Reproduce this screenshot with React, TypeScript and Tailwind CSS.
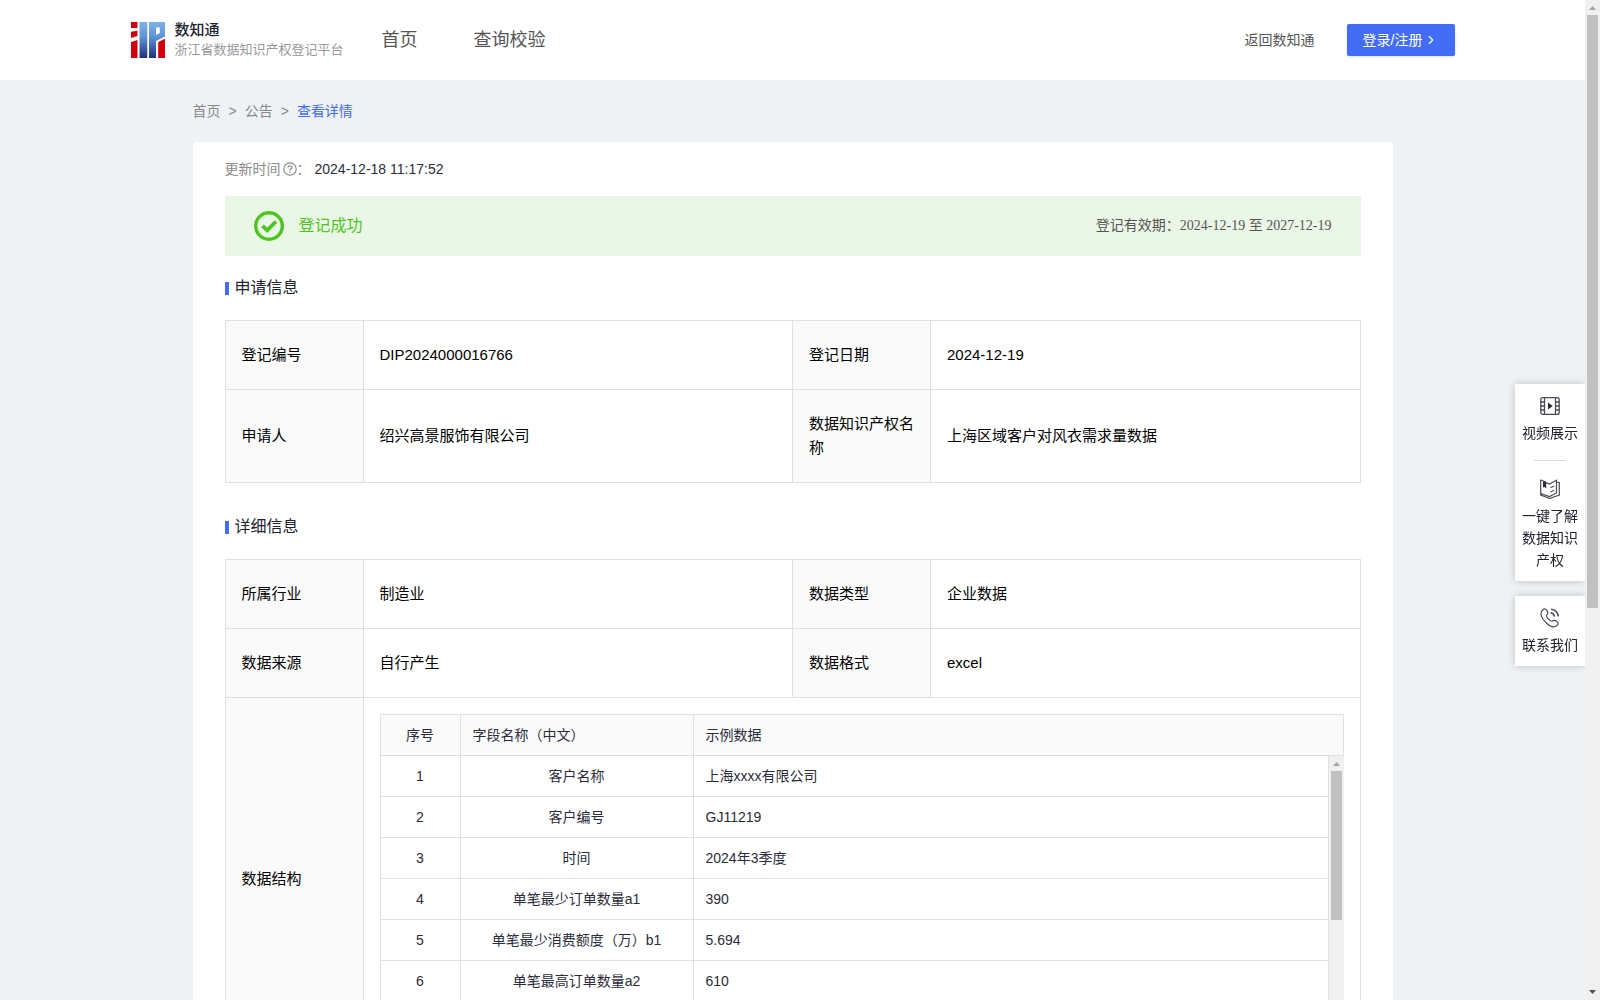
import { useState, type ReactNode } from 'react'
import clsx from 'clsx'
import { ChevronRight } from 'lucide-react'

const applyRows = [
    ['登记编号', 'DIP2024000016766', '登记日期', '2024-12-19'],
    ['申请人', '绍兴高景服饰有限公司', '数据知识产权名称', '上海区域客户对风衣需求量数据'],
]

const detailRows = [
    ['所属行业', '制造业', '数据类型', '企业数据'],
    ['数据来源', '自行产生', '数据格式', 'excel'],
]

const fields = [
    { name: '客户名称', sample: '上海xxxx有限公司' },
    { name: '客户编号', sample: 'GJ11219' },
    { name: '时间', sample: '2024年3季度' },
    { name: '单笔最少订单数量a1', sample: '390' },
    { name: '单笔最少消费额度（万）b1', sample: '5.694' },
    { name: '单笔最高订单数量a2', sample: '610' },
]

const Logo = () => (
    <svg viewBox="0 0 34 36" className="w-[34px] h-9" aria-hidden="true">
        <defs>
            <linearGradient id="logo-blue" x1="0" y1="0" x2="0" y2="36" gradientUnits="userSpaceOnUse">
                <stop offset="0" stopColor="#7fb2e8" />
                <stop offset="0.4" stopColor="#5f95d8" />
                <stop offset="1" stopColor="#22307c" />
            </linearGradient>
        </defs>
        <path d="M0 0H6.500V6H0Z M0 9.800L6.500 8.800V14L0 16Z M0 20L6.500 18V36H0Z" fill="#d2000f" />
        <path d="M8.500 0H16.300V36H8.500Z" fill="url(#logo-blue)" />
        <path d="M18 0H34V14.500L25 19V36H18Z M25 5.500V13L28.800 11V5.500Z" fill="url(#logo-blue)" fillRule="evenodd" />
        <path d="M27.200 20L34 16.800V36H27.200Z" fill="#d2000f" />
    </svg>
)

const SuccessIcon = () => (
    <svg viewBox="0 0 30 30" className="size-[30px]" fill="none" stroke="#4dc41f" aria-hidden="true">
        <circle cx="15" cy="15" r="13.300" strokeWidth="3.400" />
        <path d="M8.500 14.800L13.200 19.300L22 10.500" strokeWidth="3.800" />
    </svg>
)

const HelpIcon = () => (
    <svg viewBox="0 0 14 14" className="size-[14px]" fill="none" stroke="#8c8c8c" aria-hidden="true">
        <circle cx="7" cy="7" r="6.200" strokeWidth="1.200" />
        <path d="M5 5.600C5 3.200 9 3.200 9 5.500C9 7 7 6.900 7 8.500" strokeWidth="1.200" />
        <path d="M7 9.600V10.900" strokeWidth="1.300" />
    </svg>
)

const VideoIcon = () => (
    <svg viewBox="0 0 20 20" className="size-5" fill="none" stroke="#4a4b57" strokeWidth="1.300" aria-hidden="true">
        <rect x="0.800" y="1.600" width="18.400" height="16.800" rx="2" />
        <path d="M4.500 1.600V18.400M15.500 1.600V18.400M0.800 6H4.500M0.800 10H4.500M0.800 14H4.500M15.500 6H19.200M15.500 10H19.200M15.500 14H19.200" />
        <path d="M8 6.500V13.500L12.800 10Z" fill="#2b2c3a" stroke="none" />
    </svg>
)

const BookIcon = () => (
    <svg viewBox="0 0 20 20" className="size-5" fill="none" stroke="#4a4b57" strokeWidth="1.200" aria-hidden="true">
        <path d="M3 1.500L0.700 1.200V14.500L9.500 17.500L16.500 14V1.200L9.500 5L6.200 3.600" />
        <path d="M16.500 3L19.300 3.500V16L13 18.300L10 19.500L0.700 16V14" />
        <path d="M3 1.500L6.200 2.800V9.500L4.600 8L3 8.500Z" fill="#2b2c3a" stroke="none" />
        <path d="M10.500 8.800L14.200 7M10.500 13L14.200 11.200" />
    </svg>
)

const PhoneIcon = () => (
    <svg viewBox="0 0 20 20" className="size-5" fill="none" stroke="#4a4b57" strokeWidth="1.200" aria-hidden="true">
        <path d="M2.800 1.800C4.500 0.300 5.800 0.800 7 2.600C8.200 4.400 8.300 5.400 7 6.600C5.700 7.800 6 8.500 8 10.700C10.400 13.300 11.300 14 12.500 13C13.900 11.800 14.800 11.900 16.500 13.200C18.300 14.600 18.600 15.800 17 17.400C14.500 19.900 10.500 19 6.100 14.800C1 9.900-0.600 4.800 2.800 1.800Z" />
        <path d="M10.500 4.700C12.700 5 14 6.300 14.500 8.500M11 1.200C15 1.500 17.800 4.300 18.300 8.300" strokeWidth="1.600" />
    </svg>
)

// Classic scroll bar: arrows at both ends, thumb between them
const ScrollBar = ({ thumb }: { thumb: string }) => (
    <div className="w-[15px] shrink-0 bg-[#f0f0f0] flex flex-col items-center" aria-hidden="true">
        <svg viewBox="0 0 15 15" className="size-[15px] shrink-0"><path d="M4 10L7.500 6L11 10Z" fill="#a3a3a3" /></svg>
        <div className="grow w-[11px]">
            <div className="bg-[#c1c1c1]" style={{ height: thumb }} />
        </div>
        <svg viewBox="0 0 15 15" className="size-[15px] shrink-0"><path d="M4 5L7.500 9L11 5Z" fill="#505050" /></svg>
    </div>
)

const SectionTitle = ({ children }: { children: ReactNode }) => (
    <h2 className="flex items-center gap-[6px] text-base leading-6 text-[#22222f]">
        <span className="w-1 h-[13px] mt-px bg-[#446df6]" />
        {children}
    </h2>
)

const InfoTable = ({ rows, children }: { rows: string[][]; children?: ReactNode }) => (
    <table className="w-full table-fixed border-collapse text-[15px] leading-6 text-black text-left">
        <colgroup>
            <col className="w-[138px]" />
            <col />
            <col className="w-[138px]" />
            <col />
        </colgroup>
        <tbody>
            {rows.map((row) => (
                <tr key={row[0]} className="h-[69px]">
                    {row.map((text, i) =>
                        i % 2 === 0 ? (
                            <th key={i} scope="row" className="border border-[#e0e0e0] bg-[#fafafa] px-4 py-[22px] font-normal">{text}</th>
                        ) : (
                            <td key={i} className="border border-[#e0e0e0] px-4 py-[22px]">{text}</td>
                        )
                    )}
                </tr>
            ))}
            {children}
        </tbody>
    </table>
)

const FieldColumns = () => (
    <colgroup>
        <col className="w-20" />
        <col className="w-[233px]" />
        <col />
    </colgroup>
)

const FieldTable = () => (
    <div className="text-sm leading-[22px] text-[#2b2c3a]">
        <table className="w-full table-fixed border-collapse">
            <FieldColumns />
            <thead>
                <tr className="h-[41px] bg-[#fafafa] text-left">
                    <th className="border border-[#e0e0e0] px-3 font-normal text-center">序号</th>
                    <th className="border border-[#e0e0e0] px-3 font-normal">字段名称（中文）</th>
                    <th className="border border-[#e0e0e0] px-3 font-normal">示例数据</th>
                </tr>
            </thead>
        </table>
        <div className="flex h-[287px] overflow-hidden">
            <div className="grow">
                <table className="w-full table-fixed border-collapse">
                    <FieldColumns />
                    <tbody>
                        {fields.map((field, i) => (
                            <tr key={field.name} className={i === 0 ? 'h-10' : 'h-[41px]'}>
                                <td className={clsx('border border-[#e0e0e0] px-3 text-center', i === 0 && 'border-t-0')}>{i + 1}</td>
                                <td className={clsx('border border-[#e0e0e0] px-3 text-center', i === 0 && 'border-t-0')}>{field.name}</td>
                                <td className={clsx('border border-[#e0e0e0] px-3', i === 0 && 'border-t-0')}>{field.sample}</td>
                            </tr>
                        ))}
                    </tbody>
                </table>
            </div>
            <ScrollBar thumb="58%" />
        </div>
    </div>
)

const SideButton = ({ icon, children }: { icon: ReactNode; children: ReactNode }) => (
    <button type="button" className="flex flex-col items-center gap-[6px] w-full px-[7px] text-sm leading-[22px] text-[#22222f]">
        {icon}
        <span>{children}</span>
    </button>
)

export default function App() {
    const [active, setActive] = useState('')

    return (
        <div className="flex h-screen overflow-hidden bg-[#eef2f5] font-['Liberation_Sans','Noto_Sans_CJK_SC',sans-serif]">
            <div className="grow min-w-0 overflow-hidden">
                <header className="h-20 bg-white">
                    <div className="mx-auto max-w-[1324px] h-full flex items-center">
                        <a href="#" className="flex items-center gap-[10px]">
                            <Logo />
                            <span className="flex flex-col">
                                <strong className="text-[15px] leading-5 font-medium text-[#22222f]">数知通</strong>
                                <span className="text-[13px] leading-5 text-[#999999]">浙江省数据知识产权登记平台</span>
                            </span>
                        </a>
                        <nav className="flex gap-14 ml-[38px] text-lg leading-7 text-[#555555]">
                            {['首页', '查询校验'].map((item) => (
                                <a
                                    key={item}
                                    href="#"
                                    onClick={() => setActive(item)}
                                    className={clsx(active === item && 'text-[#446df6]')}
                                >
                                    {item}
                                </a>
                            ))}
                        </nav>
                        <a href="#" className="ml-auto mr-8 text-sm text-[#555555]">返回数知通</a>
                        <button type="button" className="flex items-center gap-[2px] w-[108px] h-8 pl-4 rounded-xs bg-[#446df6] text-white text-sm shadow-sm">
                            登录/注册
                            <ChevronRight className="size-[14px]" />
                        </button>
                    </div>
                </header>

                <main className="mx-auto max-w-[1200px]">
                    <nav className="flex gap-2 pt-5 pb-5 text-sm leading-[22px] text-[#888888]">
                        <a href="#">首页</a>
                        <span>&gt;</span>
                        <a href="#">公告</a>
                        <span>&gt;</span>
                        <a href="#" className="text-[#446df6]">查看详情</a>
                    </nav>

                    <div className="bg-white rounded-t px-8 pt-4">
                        <div className="flex items-center text-sm leading-[22px] text-[#8c8c8c]">
                            更新时间
                            <span className="ml-[2px]"><HelpIcon /></span>
                            ：
                            <time className="ml-1 text-[#2b2c3a]">2024-12-18 11:17:52</time>
                        </div>

                        <div className="mt-4 mb-5 h-[60px] px-[29px] flex items-center justify-between bg-[#ebf7e6]">
                            <div className="flex items-center gap-[15px] text-base text-[#4dc41f]">
                                <SuccessIcon />
                                登记成功
                            </div>
                            <p className="text-sm text-[#555555] font-['Liberation_Serif','Noto_Sans_CJK_SC',serif]">
                                登记有效期：2024-12-19 至 2027-12-19
                            </p>
                        </div>

                        <SectionTitle>申请信息</SectionTitle>
                        <div className="mt-5 mb-8">
                            <InfoTable rows={applyRows} />
                        </div>

                        <SectionTitle>详细信息</SectionTitle>
                        <div className="mt-5">
                            <InfoTable rows={detailRows}>
                                <tr>
                                    <th scope="row" className="border border-[#e0e0e0] bg-[#fafafa] px-4 font-normal">数据结构</th>
                                    <td colSpan={3} className="border border-[#e0e0e0] p-4">
                                        <FieldTable />
                                    </td>
                                </tr>
                            </InfoTable>
                        </div>
                    </div>
                </main>
            </div>

            <ScrollBar thumb="calc(61% + 1px)" />

            <aside className="fixed right-[15px] top-96 w-[70px] flex flex-col gap-[15px]">
                <div className="bg-white pt-3 pb-[10px] shadow-[0_0_8px_rgba(0,0,0,0.2)] [clip-path:inset(-12px_0_-12px_-12px)]">
                    <SideButton icon={<VideoIcon />}>视频展示</SideButton>
                    <hr className="w-8 mx-auto mt-4 mb-[18px] border-[#dddddd]" />
                    <SideButton icon={<BookIcon />}>一键了解数据知识产权</SideButton>
                </div>
                <div className="bg-white pt-3 pb-[10px] shadow-[0_0_8px_rgba(0,0,0,0.2)] [clip-path:inset(-12px_0_-12px_-12px)]">
                    <SideButton icon={<PhoneIcon />}>联系我们</SideButton>
                </div>
            </aside>
        </div>
    )
}
